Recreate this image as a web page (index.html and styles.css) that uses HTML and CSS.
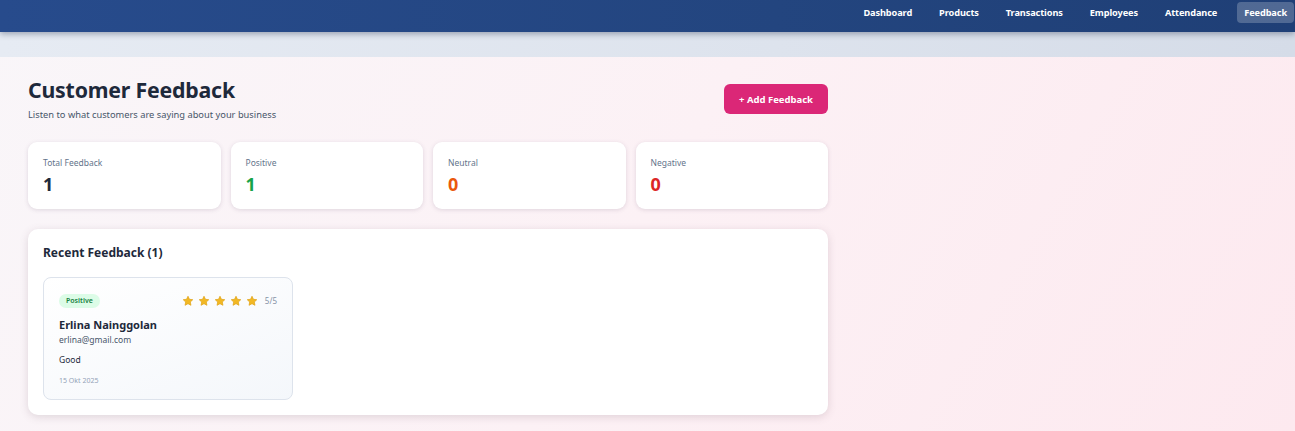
FILE: index.html
```html
<!DOCTYPE html>
<html lang="en">
<head>
<meta charset="utf-8">
<title>Customer Feedback</title>
<link rel="stylesheet" href="styles.css">
</head>
<body>
<nav class="navbar">
  <div class="nav-links">
    <a class="nav-link">Dashboard</a>
    <a class="nav-link">Products</a>
    <a class="nav-link">Transactions</a>
    <a class="nav-link">Employees</a>
    <a class="nav-link">Attendance</a>
    <a class="nav-link active">Feedback</a>
  </div>
</nav>
<div class="subbar"></div>
<main class="page">
  <div class="container">
    <header class="page-head">
      <div>
        <h1 class="title">Customer Feedback</h1>
        <p class="subtitle">Listen to what customers are saying about your business</p>
      </div>
      <button class="btn-add">+ Add Feedback</button>
    </header>

    <section class="stats">
      <div class="stat-card"><div class="stat-label">Total Feedback</div><div class="stat-value v-total">1</div></div>
      <div class="stat-card"><div class="stat-label">Positive</div><div class="stat-value v-pos">1</div></div>
      <div class="stat-card"><div class="stat-label">Neutral</div><div class="stat-value v-neu">0</div></div>
      <div class="stat-card"><div class="stat-label">Negative</div><div class="stat-value v-neg">0</div></div>
    </section>

    <section class="panel">
      <h2 class="panel-title">Recent Feedback (1)</h2>
      <div class="fb-grid">
        <article class="fb-card">
          <div class="fb-top">
            <span class="badge">Positive</span>
            <div class="rating">
              <svg class="star" viewBox="0 0 24 24"><path d="M12 2.5l2.9 6.1 6.6.8-4.9 4.6 1.3 6.6L12 17.3l-5.9 3.3 1.3-6.6-4.9-4.6 6.6-.8z"/></svg>
              <svg class="star" viewBox="0 0 24 24"><path d="M12 2.5l2.9 6.1 6.6.8-4.9 4.6 1.3 6.6L12 17.3l-5.9 3.3 1.3-6.6-4.9-4.6 6.6-.8z"/></svg>
              <svg class="star" viewBox="0 0 24 24"><path d="M12 2.5l2.9 6.1 6.6.8-4.9 4.6 1.3 6.6L12 17.3l-5.9 3.3 1.3-6.6-4.9-4.6 6.6-.8z"/></svg>
              <svg class="star" viewBox="0 0 24 24"><path d="M12 2.5l2.9 6.1 6.6.8-4.9 4.6 1.3 6.6L12 17.3l-5.9 3.3 1.3-6.6-4.9-4.6 6.6-.8z"/></svg>
              <svg class="star" viewBox="0 0 24 24"><path d="M12 2.5l2.9 6.1 6.6.8-4.9 4.6 1.3 6.6L12 17.3l-5.9 3.3 1.3-6.6-4.9-4.6 6.6-.8z"/></svg>
              <span class="score">5/5</span>
            </div>
          </div>
          <div class="fb-name">Erlina Nainggolan</div>
          <div class="fb-email">erlina@gmail.com</div>
          <p class="fb-text">Good</p>
          <div class="fb-date">15 Okt 2025</div>
        </article>
      </div>
    </section>
  </div>
</main>
</body>
</html>
```

FILE: styles.css
```css
* { box-sizing: border-box; }
html, body { margin: 0; padding: 0; }
body {
  font-family: "Noto Sans", "Open Sans", sans-serif;
  color: #1e293b;
  width: 1295px;
  height: 431px;
  overflow: hidden;
  background: linear-gradient(120deg, #f9f6f9 0%, #fcf1f5 50%, #fde9ef 100%);
}
.navbar {
  height: 32px;
  background: linear-gradient(90deg, #274b8c 0%, #23457f 60%, #1f3f76 100%);
  box-shadow: 0 2px 6px rgba(15, 30, 60, 0.35);
  display: flex;
  justify-content: flex-end;
  align-items: flex-start;
  padding: 2px 1px 0 0;
  position: relative;
  z-index: 2;
}
.nav-links { display: flex; gap: 13px; }
.nav-link {
  color: #fff;
  font-size: 9.2px;
  font-weight: 700;
  height: 21px;
  line-height: 22px;
  padding: 0 7px;
  border-radius: 4px;
  letter-spacing: -0.1px;
}
.nav-link.active { background: rgba(255, 255, 255, 0.22); }
.subbar {
  height: 25px;
  background: linear-gradient(90deg, #e6ebf3 0%, #dde3ed 60%, #d5dce8 100%);
}
.page { padding: 20px 28px 0; }
.container { width: 800px; }
.page-head {
  display: flex;
  justify-content: space-between;
  align-items: flex-start;
  margin-bottom: 21px;
}
.title {
  margin: 0;
  font-size: 21.3px;
  font-weight: 700;
  color: #1e293b;
  line-height: 26px;
  letter-spacing: -0.2px;
}
.subtitle {
  margin: 6px 0 0;
  font-size: 9.3px;
  color: #475569;
  line-height: 12px;
}
.btn-add {
  margin-top: 7px;
  background: #db2777;
  color: #fff;
  border: 0;
  border-radius: 6px;
  height: 30px;
  width: 104px;
  font-family: inherit;
  font-size: 9.5px;
  font-weight: 700;
  padding: 0;
}
.stats {
  display: grid;
  grid-template-columns: repeat(4, 1fr);
  gap: 10px;
  margin-bottom: 20px;
}
.stat-card {
  background: #fff;
  border-radius: 9px;
  height: 67px;
  padding: 15px 15px;
  box-shadow: 0 1px 4px rgba(100, 80, 110, 0.18);
}
.stat-label { font-size: 8.5px; color: #64748b; line-height: 12px; }
.stat-value { font-size: 18px; font-weight: 700; line-height: 22px; margin-top: 4px; }
.v-total { color: #1e293b; }
.v-pos { color: #16a34a; }
.v-neu { color: #ea580c; }
.v-neg { color: #dc2626; }
.panel {
  background: #fff;
  border-radius: 10px;
  padding: 15px 15px 15px;
  height: 186px;
  box-shadow: 0 2px 8px rgba(100, 70, 90, 0.18);
}
.panel-title {
  margin: 0 0 15px;
  font-size: 12px;
  font-weight: 700;
  line-height: 18px;
  color: #1e293b;
}
.fb-grid { display: grid; grid-template-columns: 250px; }
.fb-card {
  border: 1px solid #dde3ec;
  border-radius: 8px;
  height: 123px;
  padding: 15px 15px;
  background: linear-gradient(160deg, #ffffff 0%, #f4f7fb 100%);
}
.fb-top { display: flex; justify-content: space-between; align-items: center; height: 15px; }
.badge {
  background: #dcfce7;
  color: #15803d;
  font-size: 7px;
  font-weight: 600;
  padding: 0 7px;
  height: 14px;
  line-height: 14px;
  border-radius: 7px;
}
.rating { display: flex; align-items: center; gap: 4px; }
.star { width: 12px; height: 12px; fill: #f2b824; stroke: #e0a419; stroke-width: 1.5; stroke-linejoin: round; }
.score { font-size: 8px; color: #8592a6; margin-left: 3px; }
.fb-name { margin-top: 10px; font-size: 11px; font-weight: 700; color: #1e293b; line-height: 14px; }
.fb-email { font-size: 8.5px; color: #475569; line-height: 12px; margin-top: 2px; }
.fb-text { margin: 8px 0 0; font-size: 8.5px; color: #1e293b; line-height: 12px; }
.fb-date { margin-top: 10px; font-size: 7px; color: #94a3b8; line-height: 10px; }
```
